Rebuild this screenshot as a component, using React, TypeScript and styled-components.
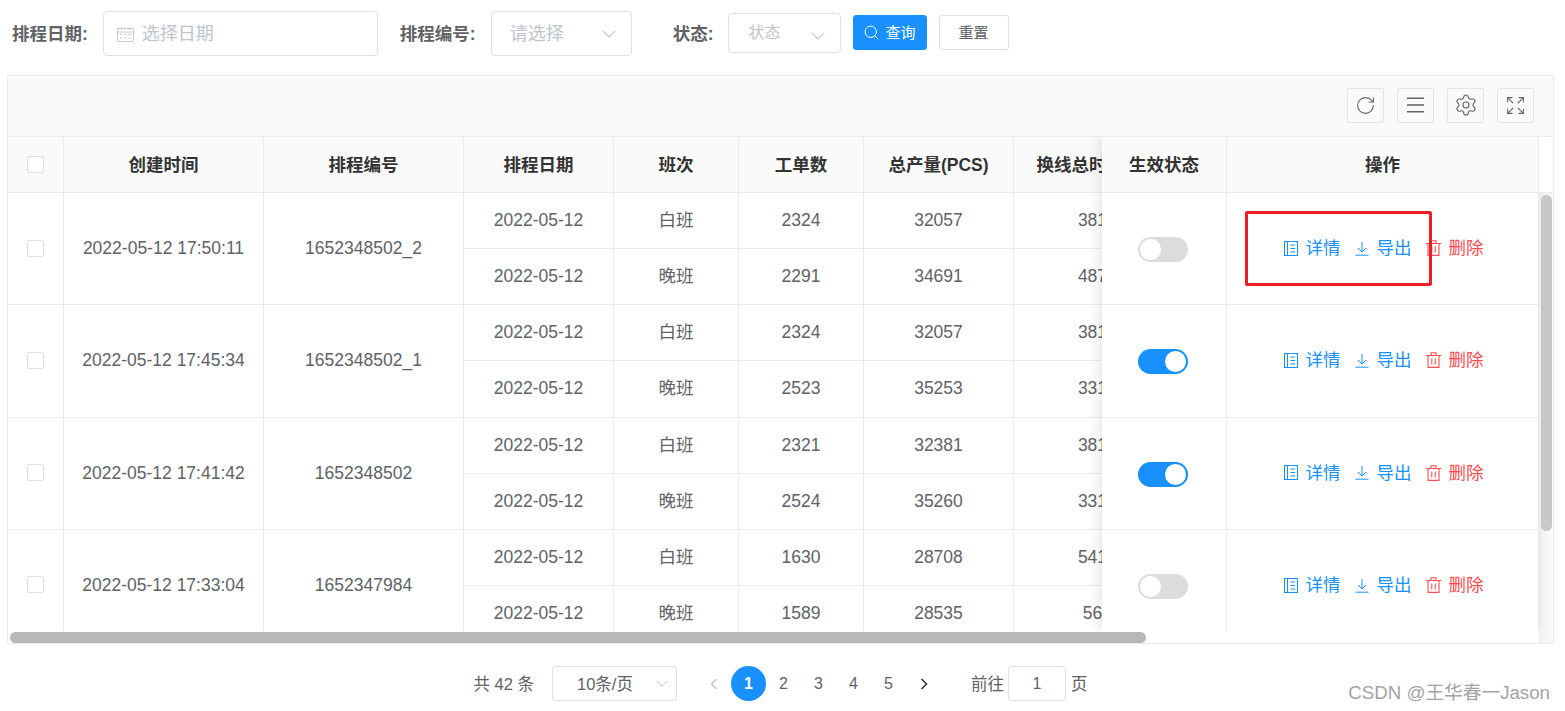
import styled, { createGlobalStyle } from 'styled-components';
import { RotateCw, Settings, Expand, Search } from 'lucide-react';

const GlobalStyle = createGlobalStyle`
  * { box-sizing: border-box; }
  html, body { margin: 0; padding: 0; background: #fff; overflow: hidden; }
  body {
    font-family: "Liberation Sans", "Noto Sans CJK SC", sans-serif;
    line-height: 20px;
    color: #606266;
  }
`;

const Page = styled.div`
  width: 1565px;
  height: 711px;
  position: relative;
  overflow: hidden;
`;

const FilterBar = styled.div`
  height: 75px;
  padding: 0 0 8px 12px;
  display: flex;
  align-items: center;
`;

const FilterLabel = styled.label<{ $offset?: number }>`
  margin-left: ${p => p.$offset ?? 0}px;
  margin-right: 15px;
  font-size: 17.5px;
  font-weight: 700;
  white-space: nowrap;
  color: #606266;
`;

const Field = styled.div<{ $w: number; $h: number; $size: number }>`
  width: ${p => p.$w}px;
  height: ${p => p.$h}px;
  padding: 0 15px 0 18px;
  display: flex;
  align-items: center;
  justify-content: space-between;
  border: 1px solid #dcdfe6;
  border-radius: 4px;
  background: #fff;
  font-size: ${p => p.$size}px;
  color: #c0c4cc;
  white-space: nowrap;
`;

const DateField = styled(Field)`
  justify-content: flex-start;
  gap: 8px;
  padding-left: 13px;
`;

const StatusField = styled(Field)`
  margin-bottom: 1px;
  padding-left: 19px;

  svg {
    margin-top: 5px;
  }
`;

const BarButton = styled.button<{ $primary?: boolean; $w: number }>`
  width: ${p => p.$w}px;
  height: 35px;
  margin: 0 0 2px 12px;
  padding: 0 2px 0 0;
  display: flex;
  align-items: center;
  justify-content: center;
  gap: 5px;
  border: 1px solid ${p => (p.$primary ? '#1890ff' : '#dcdfe6')};
  border-radius: 3px;
  background: ${p => (p.$primary ? '#1890ff' : '#fff')};
  color: ${p => (p.$primary ? '#fff' : '#606266')};
  font: inherit;
  font-size: 15px;
`;

const Card = styled.section`
  width: 1547px;
  height: 569px;
  margin-left: 7px;
  border: 1px solid #ebebeb;
  display: flex;
  flex-direction: column;
`;

const Toolbar = styled.div`
  height: 61px;
  flex: none;
  padding: 0 19px 2px 0;
  display: flex;
  align-items: center;
  justify-content: flex-end;
  gap: 13px;
  background: #fafafa;
  border-bottom: 1px solid #ebebeb;
`;

const ToolButton = styled.button`
  width: 37px;
  height: 35px;
  padding: 0;
  display: flex;
  align-items: center;
  justify-content: center;
  border: 1px solid #e4e4e4;
  border-radius: 2px;
  background: #fafafa;
  color: #606266;
`;

const Panes = styled.div`
  flex: 1;
  min-height: 0;
  display: flex;
  overflow: hidden;
`;

const MainClip = styled.div`
  flex: 1;
  min-width: 0;
  overflow: hidden;
`;

const FixedPane = styled.div`
  width: 437px;
  flex: none;
  overflow: hidden;
  background: #fff;
  box-shadow: -5px 0 10px rgba(0, 0, 0, 0.08);
  position: relative;
`;

const Gutter = styled.div`
  width: 14px;
  flex: none;
  display: flex;
  flex-direction: column;
  background: #fff;
`;

const GutterHead = styled.div`
  height: 56px;
  flex: none;
  background: #fff;
  border-bottom: 1px solid #ebebeb;
`;

const VTrack = styled.div`
  flex: 1;
  padding: 2px 1px 0 2px;
  background: linear-gradient(to right, #eeeeee, #fbfbfb);
`;

const VThumb = styled.div`
  height: 336px;
  border-radius: 6px;
  background: #c8c8c8;
`;

const Grid = styled.table<{ $w: number }>`
  width: ${p => p.$w}px;
  table-layout: fixed;
  border-collapse: separate;
  border-spacing: 0;
  font-size: 17.5px;
`;

const HeadCell = styled.th<{ $pad?: number }>`
  height: 56px;
  padding: 0 0 0 ${p => p.$pad ?? 0}px;
  background: #fafafa;
  border-right: 1px solid #ebebeb;
  border-bottom: 1px solid #ebebeb;
  color: #333;
  font-weight: 700;
  text-align: center;
  white-space: nowrap;
  overflow: hidden;
`;

const Cell = styled.td<{ $h?: number; $pad?: number }>`
  height: ${p => p.$h ?? 56.15}px;
  padding: 0 0 1px ${p => p.$pad ?? 0}px;
  background: #fff;
  border-right: 1px solid #ebebeb;
  border-bottom: 1px solid #ebebeb;
  color: #606266;
  text-align: center;
  white-space: nowrap;
  overflow: hidden;
`;

const ActionCell = styled(Cell)`
  position: relative;
  overflow: visible;
`;

const Check = styled.input.attrs({ type: 'checkbox' })`
  appearance: none;
  display: block;
  width: 17px;
  height: 17px;
  margin: 0 auto 0 19px;
  border: 1px solid #dcdfe6;
  border-radius: 2px;
  background: #fff;
`;

const Toggle = styled.button<{ $on: boolean }>`
  display: flex;
  width: 50px;
  height: 25px;
  margin: 3px 0 0 36px;
  padding: 2px;
  justify-content: ${p => (p.$on ? 'flex-end' : 'flex-start')};
  border: 0;
  border-radius: 13px;
  background: ${p => (p.$on ? '#1890ff' : '#dcdcdc')};

  &::after {
    content: '';
    width: 21px;
    height: 21px;
    border-radius: 50%;
    background: #fff;
  }
`;

const Actions = styled.div`
  padding-left: 2px;
  display: flex;
  justify-content: center;
  gap: 14px;
`;

const ActionLink = styled.a<{ $danger?: boolean }>`
  display: flex;
  align-items: center;
  gap: 8px;
  color: ${p => (p.$danger ? '#ff4d4f' : '#1890ff')};
`;

const Annotation = styled.div`
  position: absolute;
  left: 18px;
  top: 18px;
  width: 187px;
  height: 75px;
  border: 3px solid #ee1c25;
  border-radius: 2px;
  pointer-events: none;
`;

const HTrack = styled.div`
  height: 12px;
  flex: none;
  padding: 1px 0 0 2px;
  display: flex;
  justify-content: space-between;
  background: #fff;
`;

const HThumb = styled.div`
  width: 1136px;
  height: 11px;
  border-radius: 6px;
  background: #b8b8b8;
`;

const Corner = styled.div`
  width: 14px;
  height: 12px;
  margin-top: -1px;
  background: linear-gradient(to right, #f1f1f1, #fbfbfb);
`;

const Pager = styled.nav`
  width: 1547px;
  height: 35px;
  margin: 22px 0 0 7px;
  display: flex;
  align-items: center;
  justify-content: center;
  font-size: 16.5px;
  color: #606266;
`;

const PagerText = styled.span<{ $mr?: number; $ml?: number }>`
  margin-left: ${p => p.$ml ?? 0}px;
  margin-right: ${p => p.$mr ?? 0}px;
  white-space: nowrap;
`;

const SizeSelect = styled.div`
  width: 125px;
  height: 35px;
  margin-right: 19px;
  padding: 0 8px 0 24px;
  display: flex;
  align-items: center;
  justify-content: space-between;
  border: 1px solid #dcdfe6;
  border-radius: 3px;
  white-space: nowrap;
`;

const PageItem = styled.button<{ $active?: boolean }>`
  width: 35px;
  height: 35px;
  padding: 0;
  display: flex;
  align-items: center;
  justify-content: center;
  border: 0;
  border-radius: 50%;
  background: ${p => (p.$active ? '#1890ff' : 'transparent')};
  color: ${p => (p.$active ? '#fff' : '#606266')};
  font: inherit;
  font-size: 16px;
  font-weight: ${p => (p.$active ? 700 : 400)};
`;

const JumpInput = styled.div`
  width: 58px;
  height: 35px;
  margin: 0 5px 0 4px;
  display: flex;
  align-items: center;
  justify-content: center;
  border: 1px solid #dcdfe6;
  border-radius: 3px;
  font-size: 16px;
`;

const Watermark = styled.div`
  position: absolute;
  right: 15px;
  bottom: 8px;
  font-size: 18.7px;
  color: #a3a3a3;
  white-space: nowrap;
`;

function Chevron({ w = 14, h = 8, color = '#c0c4cc' }: { w?: number; h?: number; color?: string }) {
  return (
    <svg width={w} height={h} viewBox="0 0 14 8" fill="none" preserveAspectRatio="none">
      <path d="M.7.8 7 7 13.3.8" stroke={color} strokeWidth="1.1" />
    </svg>
  );
}

function PageArrow({ next, color }: { next?: boolean; color: string }) {
  return (
    <svg width="8" height="12" viewBox="0 0 8 12" fill="none" stroke={color} strokeWidth="1.5">
      <path d={next ? 'M1.5 1 6.5 6l-5 5' : 'M6.5 1l-5 5 5 5'} />
    </svg>
  );
}

function CalendarIcon() {
  return (
    <svg width="17" height="16" viewBox="0 0 17 16" fill="none" stroke="#c8ccd4">
      <rect x=".5" y="2.5" width="16" height="13" rx=".5" />
      <path d="M.5 6h16M4.5 1v3M12.5 1v3" />
      <path d="M3 8.5h2.5M7 8.5h2.5M11.5 8.5h2.5M3 12h2.5M7 12h2.5M11.5 12h2.5" />
    </svg>
  );
}

function MenuIcon() {
  return (
    <svg width="17" height="16" viewBox="0 0 17 16" fill="none" stroke="#606266" strokeWidth="1.4">
      <path d="M0 1.2h17M0 8h17M0 14.8h17" />
    </svg>
  );
}

function DetailIcon() {
  return (
    <svg width="14" height="15" viewBox="0 0 14 15" fill="none" stroke="currentColor">
      <rect x=".5" y=".5" width="13" height="14" />
      <path d="M3.5 .5v14M6.5 4h4.5M6.5 7.5h4.5M6.5 11h4.5" />
    </svg>
  );
}

function DownloadIcon() {
  return (
    <svg width="14" height="15" viewBox="0 0 14 15" fill="none" stroke="currentColor">
      <path d="M7 1v9.5M3 7l4 4 4-4M.5 14.2h13" />
    </svg>
  );
}

function TrashIcon() {
  return (
    <svg width="15" height="16" viewBox="0 0 15 16" fill="none" stroke="currentColor" strokeWidth="1.1">
      <path d="M0 3.5h15M2 3.5v11.9h11V3.5M5 3.5V.8h5v2.7M5.8 6.5v6M9.2 6.5v6" />
    </svg>
  );
}

type Shift = { name: string; orders: number; total: number; hours: number };
type Schedule = { created: string; code: string; on: boolean; shifts: Shift[] };

const schedules: Schedule[] = [
  {
    created: '2022-05-12 17:50:11',
    code: '1652348502_2',
    on: false,
    shifts: [
      { name: '白班', orders: 2324, total: 32057, hours: 381 },
      { name: '晚班', orders: 2291, total: 34691, hours: 487 },
    ],
  },
  {
    created: '2022-05-12 17:45:34',
    code: '1652348502_1',
    on: true,
    shifts: [
      { name: '白班', orders: 2324, total: 32057, hours: 381 },
      { name: '晚班', orders: 2523, total: 35253, hours: 331 },
    ],
  },
  {
    created: '2022-05-12 17:41:42',
    code: '1652348502',
    on: true,
    shifts: [
      { name: '白班', orders: 2321, total: 32381, hours: 381 },
      { name: '晚班', orders: 2524, total: 35260, hours: 331 },
    ],
  },
  {
    created: '2022-05-12 17:33:04',
    code: '1652347984',
    on: false,
    shifts: [
      { name: '白班', orders: 1630, total: 28708, hours: 541 },
      { name: '晚班', orders: 1589, total: 28535, hours: 56 },
    ],
  },
];

const mainCols = [56, 200, 200, 150, 125, 125, 150, 150];
const mainHeads = ['创建时间', '排程编号', '排程日期', '班次', '工单数', '总产量(PCS)'];

export default function App() {
  return (
    <Page>
      <GlobalStyle />
      <FilterBar>
        <FilterLabel>排程日期:</FilterLabel>
        <DateField $w={275} $h={45} $size={18}>
          <CalendarIcon />
          选择日期
        </DateField>
        <FilterLabel $offset={22}>排程编号:</FilterLabel>
        <Field $w={141} $h={45} $size={18}>
          请选择
          <Chevron />
        </Field>
        <FilterLabel $offset={41}>状态:</FilterLabel>
        <StatusField $w={113} $h={40} $size={16}>
          状态
          <Chevron />
        </StatusField>
        <BarButton $primary $w={74}>
          <Search size={17} strokeWidth={1.4} />
          查询
        </BarButton>
        <BarButton $w={70}>重置</BarButton>
      </FilterBar>

      <Card>
        <Toolbar>
          <ToolButton><RotateCw size={21} strokeWidth={1.2} /></ToolButton>
          <ToolButton><MenuIcon /></ToolButton>
          <ToolButton><Settings size={24} strokeWidth={1.1} /></ToolButton>
          <ToolButton><Expand size={21} strokeWidth={1.2} /></ToolButton>
        </Toolbar>

        <Panes>
          <MainClip>
            <Grid $w={1156}>
              <colgroup>
                {mainCols.map((w, i) => <col key={i} width={w} />)}
              </colgroup>
              <thead>
                <tr>
                  <HeadCell><Check /></HeadCell>
                  {mainHeads.map(h => <HeadCell key={h}>{h}</HeadCell>)}
                  <HeadCell $pad={6}>换线总时长(h)</HeadCell>
                </tr>
              </thead>
              <tbody>
                {schedules.map(s =>
                  s.shifts.map((shift, i) => (
                    <tr key={s.code + i}>
                      {i === 0 && <Cell rowSpan={2}><Check /></Cell>}
                      {i === 0 && <Cell rowSpan={2}>{s.created}</Cell>}
                      {i === 0 && <Cell rowSpan={2}>{s.code}</Cell>}
                      <Cell>2022-05-12</Cell>
                      <Cell>{shift.name}</Cell>
                      <Cell>{shift.orders}</Cell>
                      <Cell>{shift.total}</Cell>
                      <Cell $pad={8}>{shift.hours}</Cell>
                    </tr>
                  )),
                )}
              </tbody>
            </Grid>
          </MainClip>

          <FixedPane>
            <Grid $w={437}>
              <colgroup>
                <col width={125} />
                <col width={312} />
              </colgroup>
              <thead>
                <tr>
                  <HeadCell>生效状态</HeadCell>
                  <HeadCell>操作</HeadCell>
                </tr>
              </thead>
              <tbody>
                {schedules.map((s, i) => (
                  <tr key={s.code}>
                    <Cell $h={112.3}><Toggle $on={s.on} role="switch" aria-checked={s.on} /></Cell>
                    <ActionCell $h={112.3}>
                      <Actions>
                        <ActionLink><DetailIcon />详情</ActionLink>
                        <ActionLink><DownloadIcon />导出</ActionLink>
                        <ActionLink $danger><TrashIcon />删除</ActionLink>
                      </Actions>
                      {i === 0 && <Annotation />}
                    </ActionCell>
                  </tr>
                ))}
              </tbody>
            </Grid>
          </FixedPane>

          <Gutter>
            <GutterHead />
            <VTrack><VThumb /></VTrack>
          </Gutter>
        </Panes>

        <HTrack>
          <HThumb />
          <Corner />
        </HTrack>
      </Card>

      <Pager>
        <PagerText $mr={18}>共 42 条</PagerText>
        <SizeSelect>
          10条/页
          <Chevron w={12} h={7} />
        </SizeSelect>
        <PageItem><PageArrow color="#c0c4cc" /></PageItem>
        <PageItem $active>1</PageItem>
        <PageItem>2</PageItem>
        <PageItem>3</PageItem>
        <PageItem>4</PageItem>
        <PageItem>5</PageItem>
        <PageItem><PageArrow next color="#303133" /></PageItem>
        <PagerText $ml={30}>前往</PagerText>
        <JumpInput>1</JumpInput>
        <PagerText>页</PagerText>
      </Pager>

      <Watermark>CSDN @王华春一Jason</Watermark>
    </Page>
  );
}
